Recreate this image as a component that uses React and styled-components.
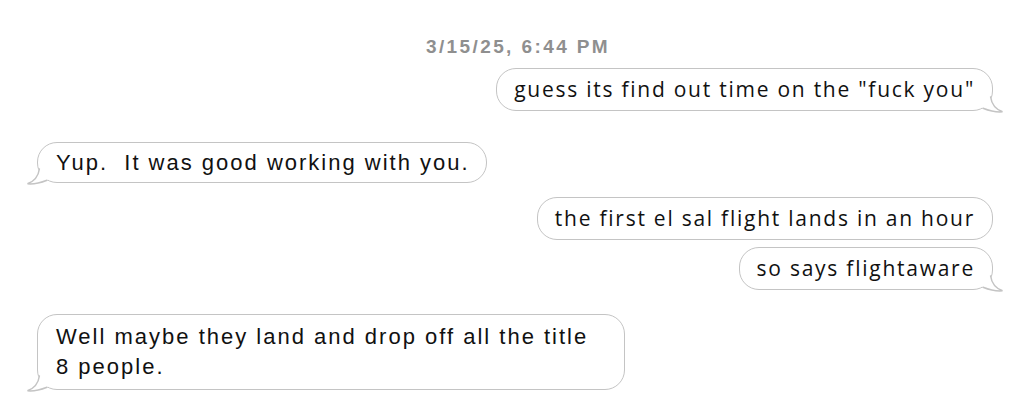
import styled, { createGlobalStyle } from "styled-components";

const GlobalStyle = createGlobalStyle`
  html, body {
    margin: 0;
    padding: 0;
    background: #ffffff;
  }
  body {
    font-family: "Liberation Sans", Arial, sans-serif;
  }
`;

const Thread = styled.div`
  width: 1030px;
  height: 410px;
  box-sizing: border-box;
  padding: 36px 37px 0 37px;
  display: flex;
  flex-direction: column;
  overflow: hidden;
`;

const Stamp = styled.div`
  align-self: center;
  font-family: "Liberation Sans", Arial, sans-serif;
  font-weight: 700;
  font-size: 19px;
  line-height: 22px;
  letter-spacing: 2.4px;
  color: #8f8f8f;
  margin-left: 6px;
`;

const Row = styled.div`
  display: flex;
  justify-content: ${({ $me }) => ($me ? "flex-end" : "flex-start")};
  margin-top: ${({ $gap }) => $gap}px;
`;

const Bubble = styled.div`
  position: relative;
  box-sizing: border-box;
  max-width: ${({ $max }) => ($max ? `${$max}px` : "none")};
  padding: ${({ $me }) => ($me ? "8px 17px 8px 17px" : "7px 16px 7px 18px")};
  border: 1.5px solid #c4c4c4;
  border-radius: 20px;
  background: #ffffff;
  color: #111111;
  white-space: ${({ $pre }) => ($pre ? "pre" : "normal")};
  font-family: ${({ $me }) =>
    $me ? `"Open Sans", "Noto Sans", sans-serif` : `"Liberation Sans", Arial, sans-serif`};
  font-size: ${({ $me }) => ($me ? "21px" : "22px")};
  line-height: ${({ $multi }) => ($multi ? "30px" : "25px")};
  letter-spacing: ${({ $me }) => ($me ? "1.75px" : "2px")};
`;

const TailSvg = styled.svg`
  position: absolute;
  bottom: -3px;
  width: 22px;
  height: 19px;
  overflow: visible;
  ${({ $me }) =>
    $me ? "right: -12px;" : "left: -12px; transform: scaleX(-1);"}
`;

function Tail({ me }) {
  return (
    <TailSvg $me={me} viewBox="0 0 22 19">
      <path
        d="M0 3 L9.2 3 C10 10 13 15 20.5 17.8 C14 18.4 8 17 4 15.6 L0 14 Z"
        fill="#ffffff"
      />
      <path
        d="M8.6 3 C9.6 10 13 15 20.5 17.8 C14 18.4 8 17 1 14.2"
        fill="none"
        stroke="#c4c4c4"
        strokeWidth="1.5"
        strokeLinecap="round"
      />
    </TailSvg>
  );
}

function Message({ me, gap, tail, multi, pre, max, children }) {
  return (
    <Row $me={me} $gap={gap}>
      <Bubble $me={me} $multi={multi} $pre={pre} $max={max}>
        {children}
        {tail && <Tail me={me} />}
      </Bubble>
    </Row>
  );
}

export default function App() {
  return (
    <>
      <GlobalStyle />
      <Thread>
        <Stamp>3/15/25, 6:44 PM</Stamp>
        <Message me gap={10} tail>
          guess its find out time on the "fuck you"
        </Message>
        <Message gap={31} tail pre>
          {"Yup.  It was good working with you."}
        </Message>
        <Message me gap={14}>
          the first el sal flight lands in an hour
        </Message>
        <Message me gap={7} tail>
          so says flightaware
        </Message>
        <Message gap={24} tail multi max={588}>
          Well maybe they land and drop off all the title 8 people.
        </Message>
      </Thread>
    </>
  );
}
